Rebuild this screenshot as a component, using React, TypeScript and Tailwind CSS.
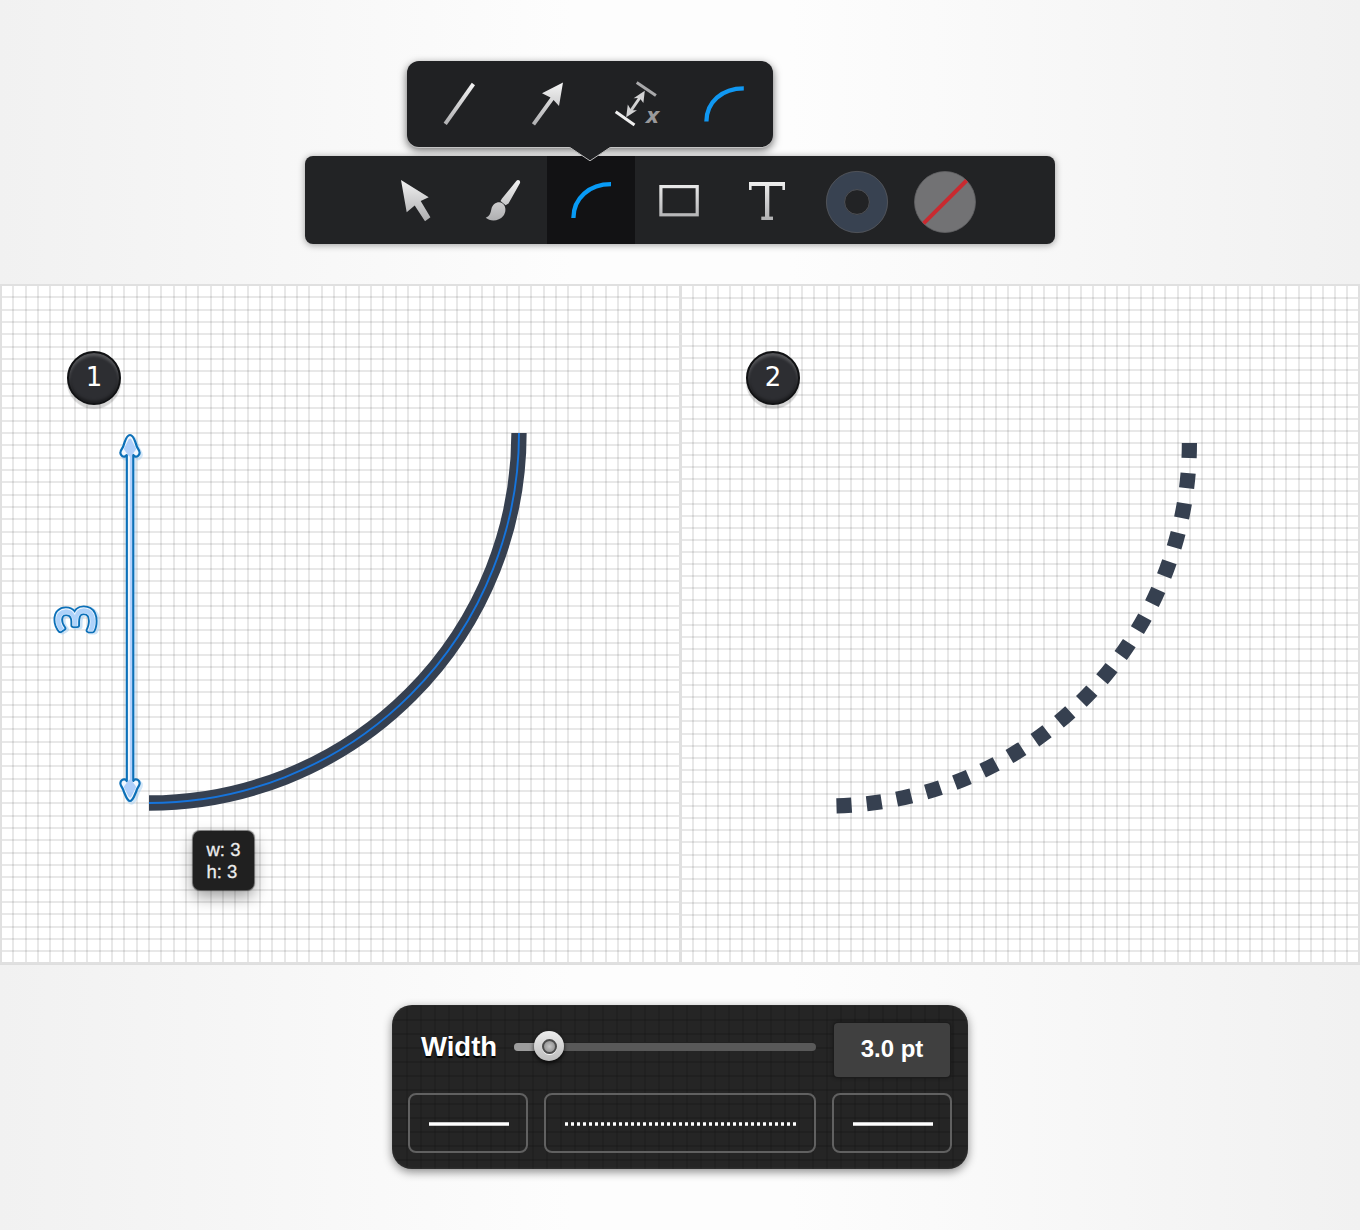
import React from "react";

const ICON = "block h-[88px] w-[88px] shrink-0 overflow-visible";

function Cell({ children, active = false }: { children: React.ReactNode; active?: boolean }) {
  return (
    <div className={active ? "h-[88px] w-[88px] bg-[#121214]" : "h-[88px] w-[88px]"}>
      <svg viewBox="0 0 88 88" className={ICON}>
        {children}
      </svg>
    </div>
  );
}

function Defs() {
  return (
    <svg className="absolute h-0 w-0">
      <defs>
        <linearGradient id="metal" gradientUnits="userSpaceOnUse" x1="0" y1="22" x2="0" y2="66">
          <stop offset="0" stopColor="#f4f4f4" />
          <stop offset="1" stopColor="#acacae" />
        </linearGradient>
      </defs>
    </svg>
  );
}

function Popover() {
  return (
    <div className="relative z-10 ml-[407px] h-[86px] w-[366px] rounded-[12px] bg-[#202123] shadow-[0_1px_0_#c4c4c4,0_3px_9px_rgba(0,0,0,0.6)]">
      <div className="flex justify-center">
        <Cell>
          <path d="M31 62.8 59.2 23" transform="translate(0.2 0)" stroke="url(#metal)" strokeWidth="3.9" />
        </Cell>
        <Cell>
          <path d="M61 21.5 40 32.3 48.5 36.5 29.9 62.2 33 64.5 51.6 39 57 45Z" fill="url(#metal)" />
        </Cell>
        <Cell>
          <path d="M46.7 21.6 65.9 34.6" stroke="#a9a9ab" strokeWidth="3" />
          <path d="M25.7 50.8 44.5 63.9" stroke="#efefef" strokeWidth="3" />
          <path d="M52 33.5 39 52.5" stroke="url(#metal)" strokeWidth="3" />
          <path d="M54.8 29.8 43.6 37.2 49.6 37 53.4 42Z" fill="#d2d2d3" />
          <path d="M36.2 56.2 37.8 43.6 41.2 49.3 47 49.2Z" fill="#d2d2d3" />
          <text x="56" y="61.6" fill="#99999b" fontSize="21.5" fontWeight="700" fontStyle="italic" fontFamily="'Open Sans', sans-serif" textLength="13" lengthAdjust="spacingAndGlyphs">x</text>
        </Cell>
        <Cell>
          <path d="M28.4 60.6C28.4 41 44 27.4 65.8 27.4" fill="none" stroke="#1098f2" strokeWidth="4.3" />
        </Cell>
      </div>
      <svg viewBox="0 0 42 16" className="absolute left-[162px] top-[85px] h-4 w-[42px]">
        <path d="M0 0H42L41 1.5 21 15 1 1.5Z" fill="#202123" />
        <path d="M0 1.5H1L21 14.8 41 1.5H42" fill="none" stroke="#b8b8b8" strokeWidth="1" />
      </svg>
    </div>
  );
}

function Toolbar() {
  return (
    <div className="ml-[305px] mt-[9px] flex h-[88px] w-[750px] rounded-[8px] bg-[#222325] pl-[66px] shadow-[0_1px_7px_rgba(0,0,0,0.38)]">
      <Cell>
        <path d="M30 24 57.7 41.3 49.7 44.9 59.4 61.3 54 65.3 43.7 49.5 35.7 56.3Z" fill="url(#metal)" />
      </Cell>
      <Cell>
        <path d="M57.3 25C58.8 22.9 62 24.6 60.9 27.3L49.5 47.5 46.6 49.2 41.5 44.9 43 42.6Z" fill="url(#metal)" />
        <path d="M26.7 61.8C31 60 31.6 57 32.4 53 33.5 47.6 39.5 44.6 43.6 47.4 47.6 50.6 47 56.5 44.2 60 40 65.4 31 65.6 26.7 61.8Z" fill="url(#metal)" />
      </Cell>
      <Cell active>
        <path d="M26.4 62C26.4 42 42.5 28.2 64 28.2" fill="none" stroke="#089bf6" strokeWidth="4.3" />
      </Cell>
      <Cell>
        <rect x="25.9" y="30.6" width="36.3" height="28.2" fill="none" stroke="url(#metal)" strokeWidth="3.2" />
      </Cell>
      <Cell>
        <g fill="url(#metal)">
          <rect x="26" y="26" width="36" height="4" />
          <rect x="26" y="26" width="2.6" height="8" />
          <rect x="59.4" y="26" width="2.6" height="8" />
          <rect x="42" y="26" width="4.3" height="38" />
          <rect x="38.3" y="60.6" width="11.7" height="3.4" />
        </g>
      </Cell>
      <Cell>
        <circle cx="46" cy="46" r="21.6" fill="none" stroke="#384251" strokeWidth="18" />
        <circle cx="46" cy="46" r="30.6" fill="none" stroke="#53565b" strokeWidth="0.9" />
        <circle cx="46" cy="46" r="12.4" fill="none" stroke="#53565b" strokeWidth="0.9" />
      </Cell>
      <Cell>
        <circle cx="46" cy="46" r="30.5" fill="#727274" stroke="#616163" strokeWidth="0.8" />
        <path d="M24.6 67.4 67.6 24.5" stroke="#c82a30" strokeWidth="4" />
      </Cell>
    </div>
  );
}

function Grid({ first, pitch, firstY, width }: { first: number; pitch: number; firstY: number; width: number }) {
  let vertical = "";
  let horizontal = "";
  for (let x = first; x < width - 2; x += pitch) vertical += `M${Math.round(x)} 0V680`;
  for (let y = firstY; y < 677; y += pitch) horizontal += `M0 ${Math.round(y)}H${width}`;
  return (
    <svg className="absolute inset-0 h-full w-full">
      <path d={vertical} stroke="#000" strokeOpacity="0.09" strokeWidth="2" />
      <path d={horizontal} stroke="#000" strokeOpacity="0.09" strokeWidth="2" />
    </svg>
  );
}

function Badge({ label, place }: { label: string; place: string }) {
  return (
    <div className={`absolute top-[67px] flex h-[54px] w-[54px] items-center justify-center rounded-full border-2 border-[#111214] bg-[#2d2e32] font-['DejaVu_Sans',sans-serif] text-[26px] text-white shadow-[0_4px_1px_rgba(0,0,0,0.16),inset_0_3px_3px_rgba(255,255,255,0.2),inset_0_-2px_3px_rgba(0,0,0,0.4)] ${place}`}>
      <span className="relative -top-px leading-none">{label}</span>
    </div>
  );
}

const SHAFT =
  "M126.8 171C124 175 119.5 171 120.6 167.5 121.3 165 123.4 163.5 124 160 125.5 156 126.5 151 130 151 133.5 151 134.5 156 136 160 136.6 163.5 138.7 165 139.4 167.5 140.5 171 136 175 133.2 171V497C136 493 140.5 497 139.4 500.5 138.7 503 136.6 504.5 136 508 134.5 511 133 517 130 517 127 517 125.5 511 124 508 123.4 504.5 121.3 503 120.6 500.5 119.5 497 124 493 126.8 497Z";

function LeftCanvas() {
  return (
    <div className="relative h-[680px] w-[681px] overflow-hidden bg-white">
      <Grid first={13.2} pitch={12.34} firstY={13.3} width={681} />
      <svg viewBox="0 0 681 680" className="absolute inset-0 h-full w-full">
        <path d="M149 519A370 370 0 0 0 519 149" fill="none" stroke="#364050" strokeWidth="15.3" />
        <path d="M149 519A370 370 0 0 0 519 149" fill="none" stroke="#1674dc" strokeWidth="1.9" />
        <path d={SHAFT} transform="translate(1.5 2)" fill="none" stroke="#9dcaf0" strokeOpacity="0.45" strokeWidth="3.5" />
        <path d={SHAFT} fill="#f2f8ff" stroke="#0c70b8" strokeWidth="2.2" strokeLinejoin="round" />
        <path d="M130 156 125.5 165 130 171 134.5 165ZM130 512 125.5 503 130 497 134.5 503Z" fill="#afcffa" stroke="#afcffa" strokeWidth="3" strokeLinejoin="round" />
        <path d="M131 170V498" stroke="#b3d1fb" strokeWidth="2.2" />
        <g transform="translate(93.5 335) rotate(-90)" fontFamily="'Open Sans', sans-serif" fontSize="51" strokeLinejoin="round">
          <text x="-14.5" y="2" textLength="27" lengthAdjust="spacingAndGlyphs" fill="none" stroke="#9dcaf0" strokeOpacity="0.5" strokeWidth="7">3</text>
          <text x="-13.5" textLength="27" lengthAdjust="spacingAndGlyphs" fill="#0c70b8" stroke="#0c70b8" strokeWidth="6">3</text>
          <text x="-13.5" textLength="27" lengthAdjust="spacingAndGlyphs" fill="#eef6ff" stroke="#eef6ff" strokeWidth="2.2">3</text>
          <text x="-14" y="0.6" textLength="27" lengthAdjust="spacingAndGlyphs" fill="#aed2fa" stroke="#aed2fa" strokeWidth="0.8">3</text>
        </g>
      </svg>
      <Badge label="1" place="left-[67px]" />
      <div className="absolute left-[193px] top-[547px] h-[59px] w-[61px] rounded-[7px] bg-[#202020] pl-[13.5px] pt-[8px] font-['Liberation_Sans',Arial,sans-serif] text-[18.5px] leading-[22px] text-[#ececec] shadow-[0_7px_16px_rgba(0,0,0,0.38),0_0_1px_1px_rgba(0,0,0,0.5)] [-webkit-text-stroke:0.3px_#ececec]">
        <div className="whitespace-nowrap">w: 3</div>
        <div className="whitespace-nowrap">h: 3</div>
      </div>
    </div>
  );
}

function RightCanvas() {
  return (
    <div className="relative h-[680px] w-[679px] overflow-hidden bg-white">
      <Grid first={12.4} pitch={12.104} firstY={13.8} width={679} />
      <svg viewBox="0 0 679 680" className="absolute inset-0 h-full w-full">
        <path d="M508.4 159A363 363 0 0 1 145.4 522" fill="none" stroke="#364050" strokeWidth="15.2" strokeDasharray="15.1 15.16" />
      </svg>
      <Badge label="2" place="left-[65px]" />
    </div>
  );
}

function Swatch({ dotted = false, box }: { dotted?: boolean; box: string }) {
  return (
    <div className={`flex h-[60px] items-center rounded-[8px] border-2 border-[#616161] pl-[19px] pr-[17px] pt-0.5 ${box}`}>
      <svg className="block h-1 w-full">
        <path d="M0 2H300" stroke="#fff" strokeWidth="3.3" strokeDasharray={dotted ? "3 3" : undefined} />
      </svg>
    </div>
  );
}

function WidthPanel() {
  return (
    <div className="ml-[392px] mt-[40px] h-[164px] w-[576px] rounded-[20px] bg-[#252525] bg-[linear-gradient(rgba(0,0,0,0.13)_2px,transparent_2px),linear-gradient(90deg,rgba(0,0,0,0.11)_2px,transparent_2px)] bg-[length:14px_14px] px-4 pt-[18px] font-['Liberation_Sans',Arial,sans-serif] font-bold text-white shadow-[0_3px_10px_rgba(0,0,0,0.45),inset_0_0_3px_rgba(255,255,255,0.12)]">
      <div className="flex h-[54px]">
        <div className="w-[106px] pl-[13px] pt-[8px] text-[27.5px] leading-[31px] [text-shadow:0_2px_1px_#000]">Width</div>
        <div className="relative mt-[20px] h-2 w-[302px] rounded-full bg-[#595959] shadow-[0_-1px_0_#222]">
          <div className="h-2 w-[34px] rounded-l-full bg-[#9d9d9d]" />
          <div className="absolute -top-[12px] left-[20px] flex h-[30px] w-[30px] items-center justify-center rounded-full bg-gradient-to-b from-[#ededed] to-[#bcbcbc] shadow-[0_2px_4px_rgba(0,0,0,0.8)]">
            <div className="h-[15px] w-[15px] rounded-full border-2 border-[#4b4b4b] bg-[radial-gradient(#c4c4c4,#858585)] shadow-[0_1px_0_#f5f5f5]" />
          </div>
        </div>
        <div className="ml-[18px] flex w-[116px] items-center justify-center rounded-[4px] bg-[#404040] pb-0.5 text-[24px] leading-none shadow-[0_0_0_1px_#1c1c1c,0_0_4px_#101010]">
          3.0 pt
        </div>
      </div>
      <div className="mt-4 flex gap-4">
        <Swatch box="w-[120px]" />
        <Swatch box="w-[272px]" dotted />
        <Swatch box="w-[120px]" />
      </div>
    </div>
  );
}

export default function App() {
  return (
    <div className="h-[1230px] w-[1360px] overflow-hidden bg-[linear-gradient(90deg,#f1f1f1,#fdfdfd_42%,#fdfdfd_58%,#f1f1f1)] pt-[61px]">
      <Defs />
      <Popover />
      <Toolbar />
      <div className="relative mt-[40px] flex h-[681px] border-b-2 border-[#dedede]">
        <LeftCanvas />
        <RightCanvas />
        <div className="pointer-events-none absolute inset-x-0 -bottom-[1px] top-0 border-2 border-[#e0e0e0]" />
        <div className="absolute inset-y-0 left-[679px] w-[3px] bg-[#e0e0e0]" />
      </div>
      <WidthPanel />
    </div>
  );
}
